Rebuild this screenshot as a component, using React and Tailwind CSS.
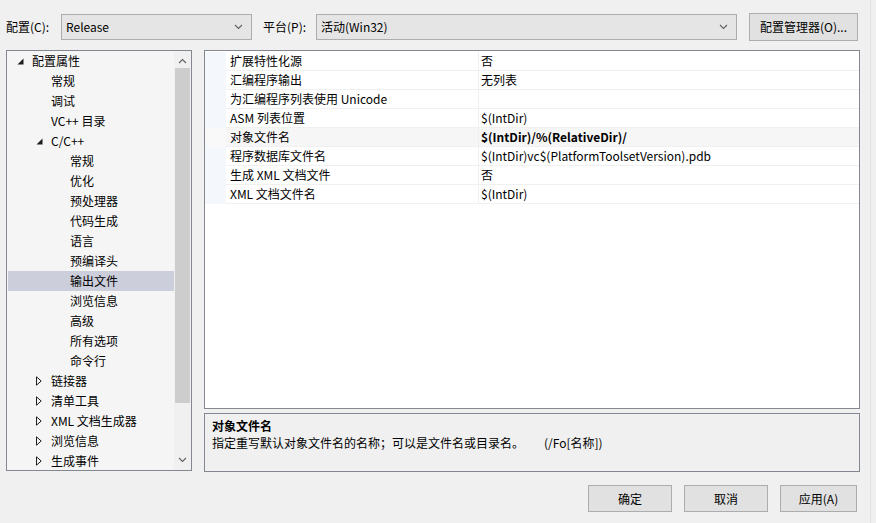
import React from 'react';

const FONT = { fontFamily: '"Noto Sans CJK SC", "Noto Sans", sans-serif' };

const TREE = [
  { label: '配置属性', level: 0, arrow: 'open' },
  { label: '常规', level: 1 },
  { label: '调试', level: 1 },
  { label: 'VC++ 目录', level: 1 },
  { label: 'C/C++', level: 1, arrow: 'open' },
  { label: '常规', level: 2 },
  { label: '优化', level: 2 },
  { label: '预处理器', level: 2 },
  { label: '代码生成', level: 2 },
  { label: '语言', level: 2 },
  { label: '预编译头', level: 2 },
  { label: '输出文件', level: 2, selected: true },
  { label: '浏览信息', level: 2 },
  { label: '高级', level: 2 },
  { label: '所有选项', level: 2 },
  { label: '命令行', level: 2 },
  { label: '链接器', level: 1, arrow: 'closed' },
  { label: '清单工具', level: 1, arrow: 'closed' },
  { label: 'XML 文档生成器', level: 1, arrow: 'closed' },
  { label: '浏览信息', level: 1, arrow: 'closed' },
  { label: '生成事件', level: 1, arrow: 'closed' },
];

const PROPS = [
  { name: '扩展特性化源', value: '否' },
  { name: '汇编程序输出', value: '无列表' },
  { name: '为汇编程序列表使用 Unicode', value: '' },
  { name: 'ASM 列表位置', value: '$(IntDir)' },
  { name: '对象文件名', value: '$(IntDir)/%(RelativeDir)/', bold: true, active: true },
  { name: '程序数据库文件名', value: '$(IntDir)vc$(PlatformToolsetVersion).pdb' },
  { name: '生成 XML 文档文件', value: '否' },
  { name: 'XML 文档文件名', value: '$(IntDir)' },
];

function Chevron({ up }) {
  return (
    <svg width="9" height="6" viewBox="0 0 9 6" className="shrink-0">
      <path d={up ? 'M1 5 L4.5 1.5 L8 5' : 'M1 1 L4.5 4.5 L8 1'} fill="none" stroke="#606060" strokeWidth="1.1" />
    </svg>
  );
}

function Arrow({ kind }) {
  if (kind === 'open') {
    return (
      <svg width="7" height="7" viewBox="0 0 7 7">
        <path d="M6.5 0.5 L6.5 6.5 L0.5 6.5 Z" fill="#1e1e1e" />
      </svg>
    );
  }
  return (
    <svg width="6" height="10" viewBox="0 0 6 10">
      <path d="M0.5 0.8 L5.2 5 L0.5 9.2 Z" fill="none" stroke="#1e1e1e" strokeWidth="1" />
    </svg>
  );
}

function Combo({ value, width }) {
  return (
    <div className={`${width} h-[26px] bg-[#e5e5e5] border border-[#adadad] flex items-center pl-[4px] pr-[8px]`}>
      <span className="flex-1 text-[12px]">{value}</span>
      <Chevron />
    </div>
  );
}

export default function App() {
  return (
    <div style={FONT} className="w-[876px] h-[523px] bg-[#f0f0f0] text-black text-[12px] overflow-hidden flex">
      <div className="w-[871px] h-full border-r border-[#e2e2e2] flex flex-col">
        {/* top bar */}
        <div className="h-[50px] flex items-start pt-[14px] pl-[6px]">
          <div className="h-[26px] flex items-center w-[55px]">配置(C):</div>
          <Combo value="Release" width="w-[191px]" />
          <div className="h-[26px] flex items-center ml-[11px] w-[53px]">平台(P):</div>
          <Combo value="活动(Win32)" width="w-[421px]" />
          <button className="ml-[12px] w-[109px] h-[28px] -mt-[1px] bg-[#e1e1e1] border border-[#adadad] text-[12px]">
            配置管理器(O)...
          </button>
        </div>

        {/* main area */}
        <div className="flex pl-[6px]">
          {/* tree */}
          <div className="w-[186px] h-[421px] border border-[#828790] bg-[#f5f5f5] flex">
            <div className="flex-1 pl-[1px]">
              {TREE.map((t, i) => (
                <div
                  key={i}
                  className={`h-[20px] flex items-center ${t.selected ? 'bg-[#cccedb]' : ''}`}
                >
                  <div style={{ width: t.level * 19 }} className="shrink-0" />
                  <div className="w-[24px] shrink-0 flex items-center pl-[9px]">
                    {t.arrow && <Arrow kind={t.arrow} />}
                  </div>
                  <span className="whitespace-nowrap">{t.label}</span>
                </div>
              ))}
            </div>
            <div className="w-[17px] bg-[#f0f0f0] flex flex-col items-center pb-[2px]">
              <div className="h-[17px] flex items-center justify-center pt-[2px]">
                <Chevron up />
              </div>
              <div className="w-[15px] h-[335px] bg-[#cdcdcd]" />
              <div className="flex-1" />
              <div className="h-[17px] flex items-center justify-center">
                <Chevron />
              </div>
            </div>
          </div>

          {/* right column */}
          <div className="ml-[12px] w-[656px] flex flex-col gap-[4px]">
            <div className="h-[359px] border border-[#828790] bg-white pt-[1px]">
              {PROPS.map((p, i) => (
                <div key={i} className="h-[19px] flex">
                  <div className={`w-[21px] shrink-0 ${p.active ? 'bg-[#f9f9f9]' : 'bg-[#f4f7fc]'}`} />
                  <div
                    className={`w-[253px] shrink-0 pl-[4px] flex items-center border-b border-r border-[#f0f0f0] ${p.active ? 'bg-[#f6f6f6]' : ''}`}
                  >
                    {p.name}
                  </div>
                  <div
                    className={`flex-1 pl-[2px] flex items-center border-b border-[#f0f0f0] whitespace-nowrap ${p.bold ? 'font-bold' : ''} ${p.active ? 'bg-[#f6f6f6]' : ''}`}
                  >
                    {p.value}
                  </div>
                </div>
              ))}
            </div>
            <div className="h-[59px] border border-[#828790] bg-[#f0f0f0] pl-[7px] pt-[3px] leading-[17px]">
              <div className="font-bold">对象文件名</div>
              <div>
                指定重写默认对象文件名的名称；可以是文件名或目录名。
                <span className="ml-[20px]">(/Fo[名称])</span>
              </div>
            </div>
          </div>
        </div>

        {/* buttons */}
        <div className="flex justify-end gap-[12px] pr-[13px] mt-[13px]">
          <button className="w-[84px] h-[27px] bg-[#e1e1e1] border border-[#adadad] text-[12px]">确定</button>
          <button className="w-[84px] h-[27px] bg-[#e1e1e1] border border-[#adadad] text-[12px]">取消</button>
          <button className="w-[77px] h-[27px] bg-[#e1e1e1] border border-[#adadad] text-[12px]">应用(A)</button>
        </div>
      </div>
    </div>
  );
}
